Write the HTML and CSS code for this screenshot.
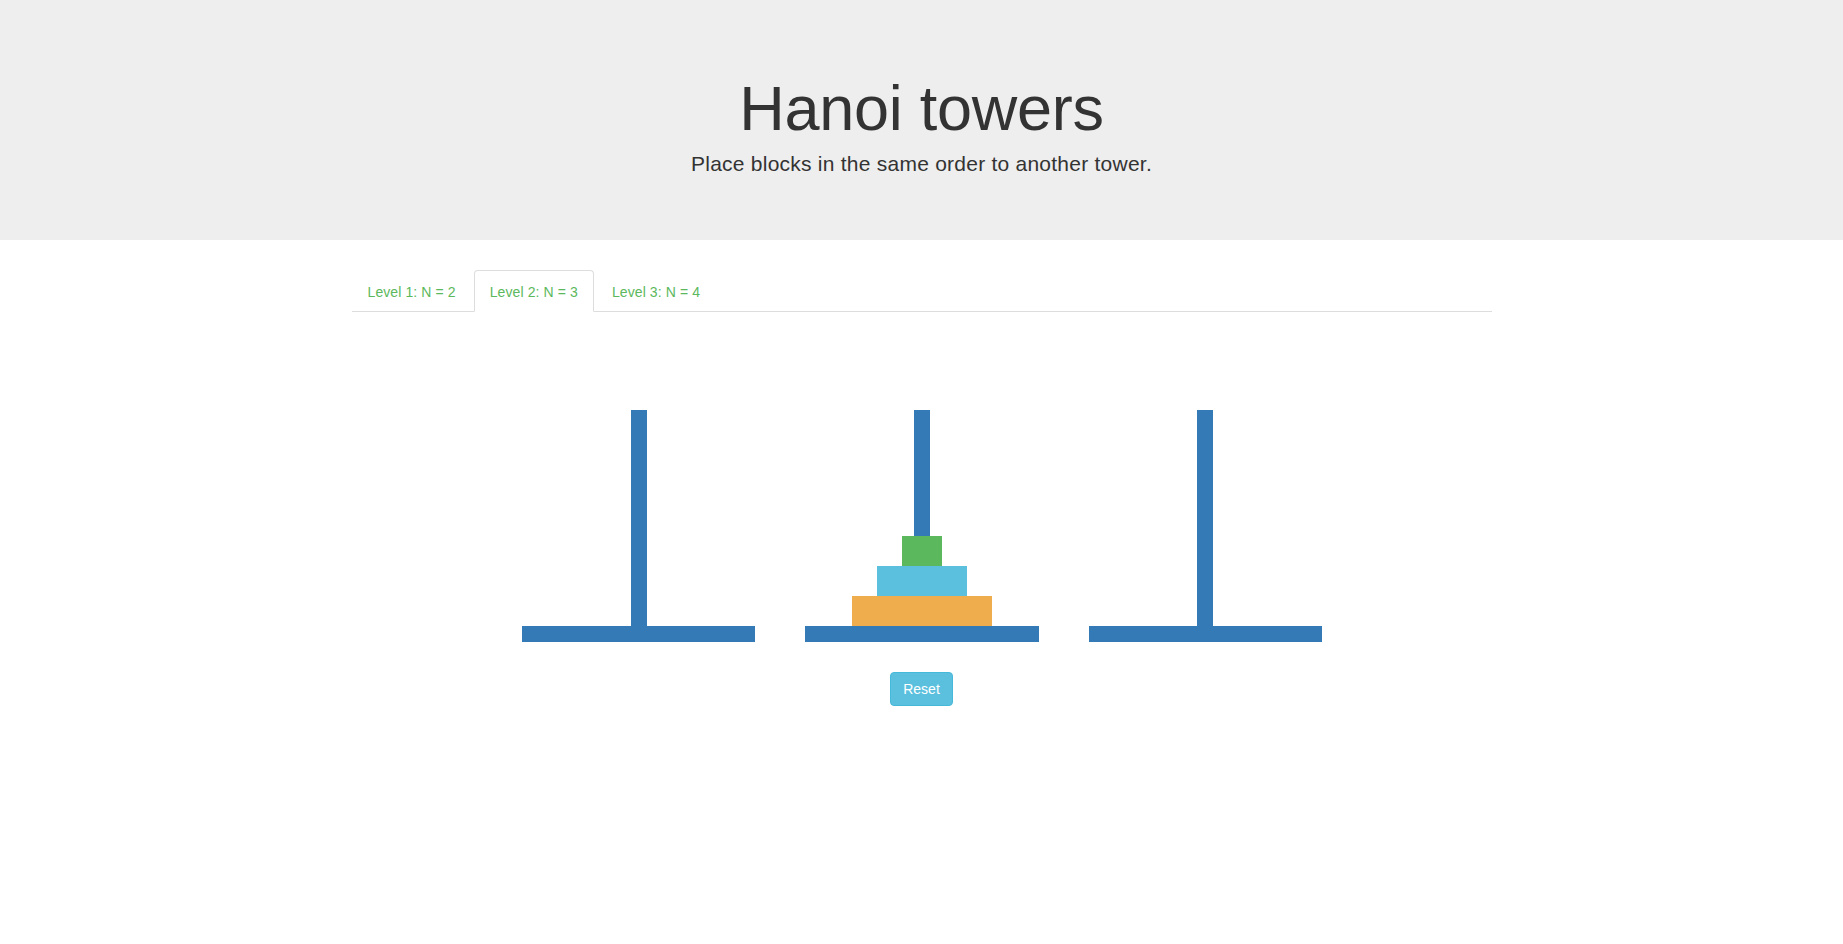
FILE: index.html
```html
<!DOCTYPE html>
<html lang="en">
<head>
<meta charset="utf-8">
<title>Hanoi towers</title>
<link rel="stylesheet" href="styles.css">
</head>
<body>
<div class="jumbotron">
  <div class="container">
    <h1 class="title">Hanoi towers</h1>
    <p class="lead">Place blocks in the same order to another tower.</p>
  </div>
</div>
<div class="container">
  <ul class="nav-tabs">
    <li class="tab"><a class="tab-link" href="#">Level 1: N = 2</a></li>
    <li class="tab"><a class="tab-link active" href="#">Level 2: N = 3</a></li>
    <li class="tab"><a class="tab-link" href="#">Level 3: N = 4</a></li>
  </ul>
  <div class="board">
    <div class="towers">
      <div class="tower">
        <div class="rod"></div>
        <div class="base"></div>
      </div>
      <div class="tower">
        <div class="rod">
          <div class="disc disc-green"></div>
          <div class="disc disc-cyan"></div>
          <div class="disc disc-orange"></div>
        </div>
        <div class="base"></div>
      </div>
      <div class="tower">
        <div class="rod"></div>
        <div class="base"></div>
      </div>
    </div>
    <button class="btn-reset" type="button">Reset</button>
  </div>
</div>
</body>
</html>
```
FILE: styles.css
```css
* { box-sizing: border-box; }

html, body {
  margin: 0;
  padding: 0;
}

body {
  font-family: "Liberation Sans", Arial, sans-serif;
  font-size: 14px;
  line-height: 1.42857143;
  color: #333;
  background: #fff;
}

.container {
  width: 1170px;
  margin: 0 auto;
  padding: 0 15px;
}

.jumbotron {
  background: #eee;
  padding: 48px 0;
  margin-bottom: 30px;
  text-align: center;
}

.title {
  margin: 26px 0 6px;
  font-size: 63px;
  line-height: 1.1;
  font-weight: 400;
  letter-spacing: -0.25px;
  color: #333;
}

.lead {
  margin: 0 0 13px;
  font-size: 21px;
  line-height: 30px;
  font-weight: 400;
  letter-spacing: 0.24px;
}

.nav-tabs {
  list-style: none;
  margin: 0;
  padding: 0;
  display: flex;
  border-bottom: 1px solid #ddd;
}

.tab {
  margin-bottom: -1px;
}

.tab-link {
  display: block;
  margin-right: 2px;
  padding: 11px 15px 9px;
  line-height: 20px;
  letter-spacing: 0.1px;
  border: 1px solid transparent;
  border-radius: 4px 4px 0 0;
  color: #5cb85c;
  text-decoration: none;
}

.tab-link.active {
  background: #fff;
  border-color: #ddd #ddd transparent;
}

.board {
  padding-top: 98px;
  display: flex;
  flex-direction: column;
  align-items: center;
}

.towers {
  display: flex;
  gap: 50px;
  margin-left: 1px;
}

.tower {
  width: calc(700px / 3);
  display: flex;
  flex-direction: column;
}

.rod {
  height: 216px;
  display: flex;
  flex-direction: column;
  justify-content: flex-end;
  align-items: center;
  background: linear-gradient(#337ab7, #337ab7) center / 16px 100% no-repeat;
}

.base {
  height: 16px;
  background: #337ab7;
}

.disc {
  height: 30px;
}

.disc-green { width: 40px; background: #5cb85c; }
.disc-cyan { width: 90px; background: #5bc0de; }
.disc-orange { width: 140px; background: #f0ad4e; }

.btn-reset {
  margin-top: 30px;
  padding: 6px 12px;
  font-family: inherit;
  font-size: 14px;
  line-height: 20px;
  color: #fff;
  background: #5bc0de;
  border: 1px solid #46b8da;
  border-radius: 4px;
  cursor: pointer;
}
```
